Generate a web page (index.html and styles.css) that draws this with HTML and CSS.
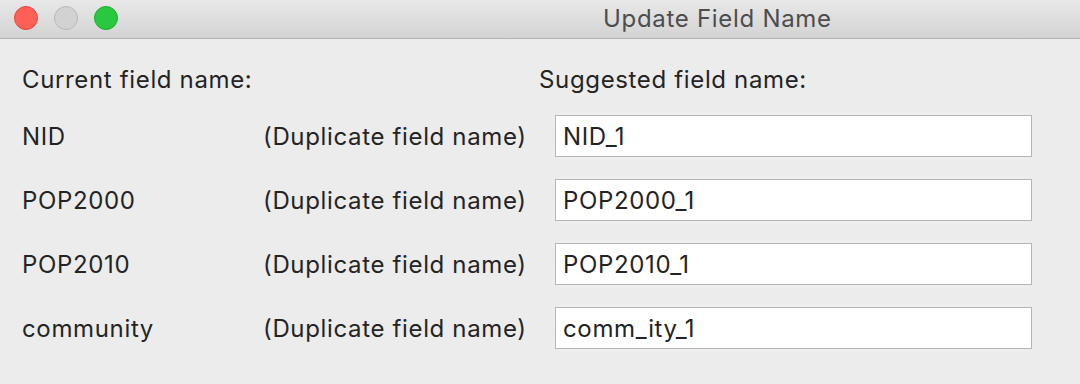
FILE: index.html
```html
<!DOCTYPE html>
<html lang="en">
<head>
  <meta charset="UTF-8" />
  <title>Update Field Name</title>
  <link rel="stylesheet" href="styles.css">
</head>
<body>
  <div class="window">
    <div class="titlebar">
      <div class="lights">
        <span class="light close"></span>
        <span class="light minimize"></span>
        <span class="light zoom"></span>
      </div>
      <div class="title">Update Field Name</div>
    </div>

    <div class="content">
      <div class="head">Current field name:</div>
      <div></div>
      <div class="head suggested">Suggested field name:</div>

      <div class="name">NID</div>
      <div class="note">(Duplicate field name)</div>
      <input class="field" type="text" value="NID_1">

      <div class="name">POP2000</div>
      <div class="note">(Duplicate field name)</div>
      <input class="field" type="text" value="POP2000_1">

      <div class="name">POP2010</div>
      <div class="note">(Duplicate field name)</div>
      <input class="field" type="text" value="POP2010_1">

      <div class="name">community</div>
      <div class="note">(Duplicate field name)</div>
      <input class="field" type="text" value="comm_ity_1">
    </div>
  </div>
</body>
</html>
```

FILE: styles.css
```css
body {
  margin: 0;
  background-color: #ececec;
  font-family: 'Inter', 'Helvetica Neue', sans-serif;
  color: #242424;
}
.window {
  width: 1080px;
  height: 384px;
  background: #ececec;
}
.titlebar {
  height: 38px;
  display: flex;
  align-items: center;
  background: linear-gradient(180deg, #e9e8e9, #d4d3d4);
  border-bottom: 1px solid #b2b2b2;
}
.lights {
  display: flex;
  gap: 16px;
  padding-left: 14px;
  margin-top: -3px;
}
.light {
  width: 22px;
  height: 22px;
  border-radius: 50%;
  border: 1px solid transparent;
}
.close { background: #fe5f57; border-color: #e2463f; }
.minimize { background: #d2d2d2; border-color: #b9b9b9; }
.zoom { background: #28c940; border-color: #1dad2b; }
.title {
  margin-left: 485px;
  font-size: 24px;
  letter-spacing: 0.7px;
  color: #4d4d4d;
  margin-top: -2px;
}
.content {
  display: grid;
  grid-template-columns: 241px 276px 493px;
  grid-template-rows: 28px repeat(4, 42px);
  row-gap: 22px;
  align-items: center;
  padding: 26px 0 0 22px;
  font-size: 24px;
  letter-spacing: 0.65px;
}
.field {
  margin: 0 0 0 16px;
  width: 477px;
  height: 42px;
  box-sizing: border-box;
  border: 1px solid #b5b5b5;
  background: #fff;
  padding: 0 7px;
  font-family: inherit;
  font-size: 24px;
  letter-spacing: 0.65px;
  color: #242424;
  outline: none;
}
```
